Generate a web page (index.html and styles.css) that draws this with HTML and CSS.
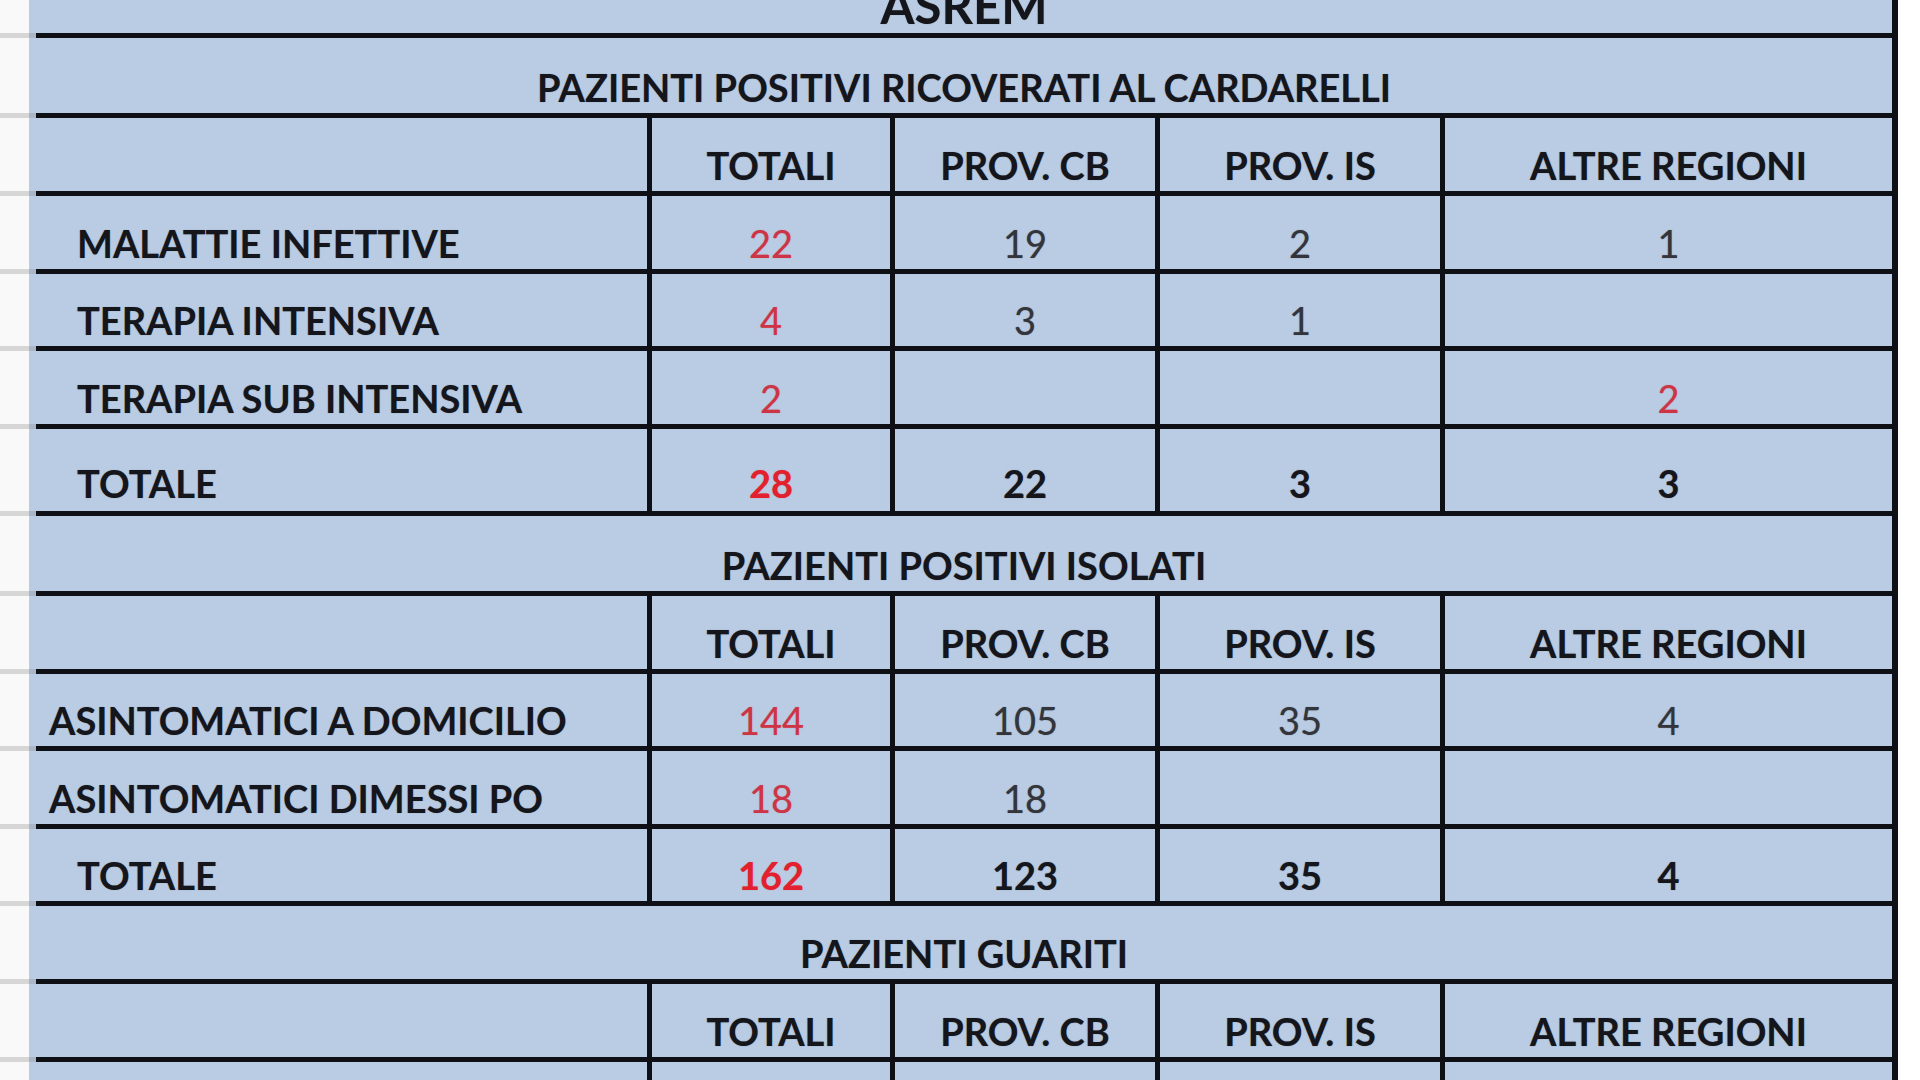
FILE: index.html
```html
<!DOCTYPE html>
<html lang="it">
<head>
<meta charset="utf-8">
<title>ASREM</title>
<link rel="stylesheet" href="styles.css">
</head>
<body>
<main class="sheet">
  <div class="row h38">
    <div class="g"></div><div class="p"></div>
    <div class="c title top"><span class="t">ASREM</span></div>
  </div>

  <div class="row h80">
    <div class="g"></div><div class="p"></div>
    <div class="c title"><span class="t">PAZIENTI POSITIVI RICOVERATI AL CARDARELLI</span></div>
  </div>
  <div class="row h78">
    <div class="g"></div><div class="p"></div>
    <div class="c lab"></div>
    <div class="c num b"><span>TOTALI</span></div>
    <div class="c num b"><span>PROV. CB</span></div>
    <div class="c num b"><span>PROV. IS</span></div>
    <div class="c num b last"><span>ALTRE REGIONI</span></div>
  </div>
  <div class="row h78">
    <div class="g"></div><div class="p"></div>
    <div class="c lab in"><span>MALATTIE INFETTIVE</span></div>
    <div class="c num red"><span>22</span></div>
    <div class="c num"><span>19</span></div>
    <div class="c num"><span>2</span></div>
    <div class="c num last"><span>1</span></div>
  </div>
  <div class="row h77">
    <div class="g"></div><div class="p"></div>
    <div class="c lab in"><span>TERAPIA INTENSIVA</span></div>
    <div class="c num red"><span>4</span></div>
    <div class="c num"><span>3</span></div>
    <div class="c num"><span>1</span></div>
    <div class="c num last"></div>
  </div>
  <div class="row h78">
    <div class="g"></div><div class="p"></div>
    <div class="c lab in"><span>TERAPIA SUB INTENSIVA</span></div>
    <div class="c num red"><span>2</span></div>
    <div class="c num"></div>
    <div class="c num"></div>
    <div class="c num red last"><span>2</span></div>
  </div>
  <div class="row h87 tot">
    <div class="g"></div><div class="p"></div>
    <div class="c lab in"><span>TOTALE</span></div>
    <div class="c num b red"><span>28</span></div>
    <div class="c num b"><span>22</span></div>
    <div class="c num b"><span>3</span></div>
    <div class="c num b last"><span>3</span></div>
  </div>

  <div class="row h80">
    <div class="g"></div><div class="p"></div>
    <div class="c title"><span class="t">PAZIENTI POSITIVI ISOLATI</span></div>
  </div>
  <div class="row h78">
    <div class="g"></div><div class="p"></div>
    <div class="c lab"></div>
    <div class="c num b"><span>TOTALI</span></div>
    <div class="c num b"><span>PROV. CB</span></div>
    <div class="c num b"><span>PROV. IS</span></div>
    <div class="c num b last"><span>ALTRE REGIONI</span></div>
  </div>
  <div class="row h77">
    <div class="g"></div><div class="p"></div>
    <div class="c lab out"><span>ASINTOMATICI A DOMICILIO</span></div>
    <div class="c num red"><span>144</span></div>
    <div class="c num"><span>105</span></div>
    <div class="c num"><span>35</span></div>
    <div class="c num last"><span>4</span></div>
  </div>
  <div class="row h78">
    <div class="g"></div><div class="p"></div>
    <div class="c lab out"><span>ASINTOMATICI DIMESSI PO</span></div>
    <div class="c num red"><span>18</span></div>
    <div class="c num"><span>18</span></div>
    <div class="c num"></div>
    <div class="c num last"></div>
  </div>
  <div class="row h77">
    <div class="g"></div><div class="p"></div>
    <div class="c lab in"><span>TOTALE</span></div>
    <div class="c num b red"><span>162</span></div>
    <div class="c num b"><span>123</span></div>
    <div class="c num b"><span>35</span></div>
    <div class="c num b last"><span>4</span></div>
  </div>

  <div class="row h78">
    <div class="g"></div><div class="p"></div>
    <div class="c title"><span class="t">PAZIENTI GUARITI</span></div>
  </div>
  <div class="row h78">
    <div class="g"></div><div class="p"></div>
    <div class="c lab"></div>
    <div class="c num b"><span>TOTALI</span></div>
    <div class="c num b"><span>PROV. CB</span></div>
    <div class="c num b"><span>PROV. IS</span></div>
    <div class="c num b last"><span>ALTRE REGIONI</span></div>
  </div>
  <div class="row h78">
    <div class="g"></div><div class="p"></div>
    <div class="c lab"></div>
    <div class="c num"></div>
    <div class="c num"></div>
    <div class="c num"></div>
    <div class="c num last"></div>
  </div>
</main>
</body>
</html>
```

FILE: styles.css
```css
html, body {
  margin: 0;
  padding: 0;
  background: #ffffff;
  overflow: hidden;
}
body {
  width: 1920px;
  height: 1080px;
  font-family: "Lato", "Liberation Sans", sans-serif;
  color: #15151c;
}
.sheet {
  display: flex;
  flex-direction: column;
  width: 1898px;
}
.row {
  display: grid;
  grid-template-columns: 29px 7px 616px 243px 265px 285px 453px;
  grid-template-rows: 100%;
  box-sizing: border-box;
  flex: none;
}
.h38 { height: 38px; }
.h77 { height: 77px; }
.h78 { height: 78px; }
.h80 { height: 80px; }
.h87 { height: 87px; }

.g {
  background: #f9f9f9;
  border-bottom: 5px solid #d6d6d6;
  min-height: 0;
}
.p {
  background: #b9cce3;
  border-bottom: 5px solid #aab6c6;
  min-height: 0;
}
.c {
  background: #b9cce3;
  border-bottom: 5px solid #0f1016;
  border-right: 5px solid #0f1016;
  display: flex;
  align-items: flex-end;
  font-size: 38px;
  line-height: 1;
  padding-bottom: 7px;
  min-width: 0;
  min-height: 0;
  text-shadow: 0 0 1px rgba(20, 20, 30, 0.35);
}
.c.last { border-right-width: 6px; }
.title {
  grid-column: 3 / 8;
  border-right-width: 6px;
  justify-content: center;
  font-weight: 700;
  padding-bottom: 7px;
}
.title.top {
  font-size: 49px;
  padding-bottom: 3px;
}
.lab {
  font-weight: 700;
  white-space: nowrap;
}
.lab.in { padding-left: 41px; }
.lab.out { padding-left: 13px; }
.num {
  justify-content: center;
  font-weight: 400;
  color: #34353b;
  white-space: nowrap;
  text-shadow: 0 0 1px rgba(40, 40, 50, 0.5);
}
.num.b {
  font-weight: 700;
  color: #15151c;
}
.num.red {
  color: #cd3546;
  text-shadow: 0 0 1px rgba(200, 50, 70, 0.5);
}
.num.b.red { color: #e3202d; }
.tot .c { padding-bottom: 9px; }
```
